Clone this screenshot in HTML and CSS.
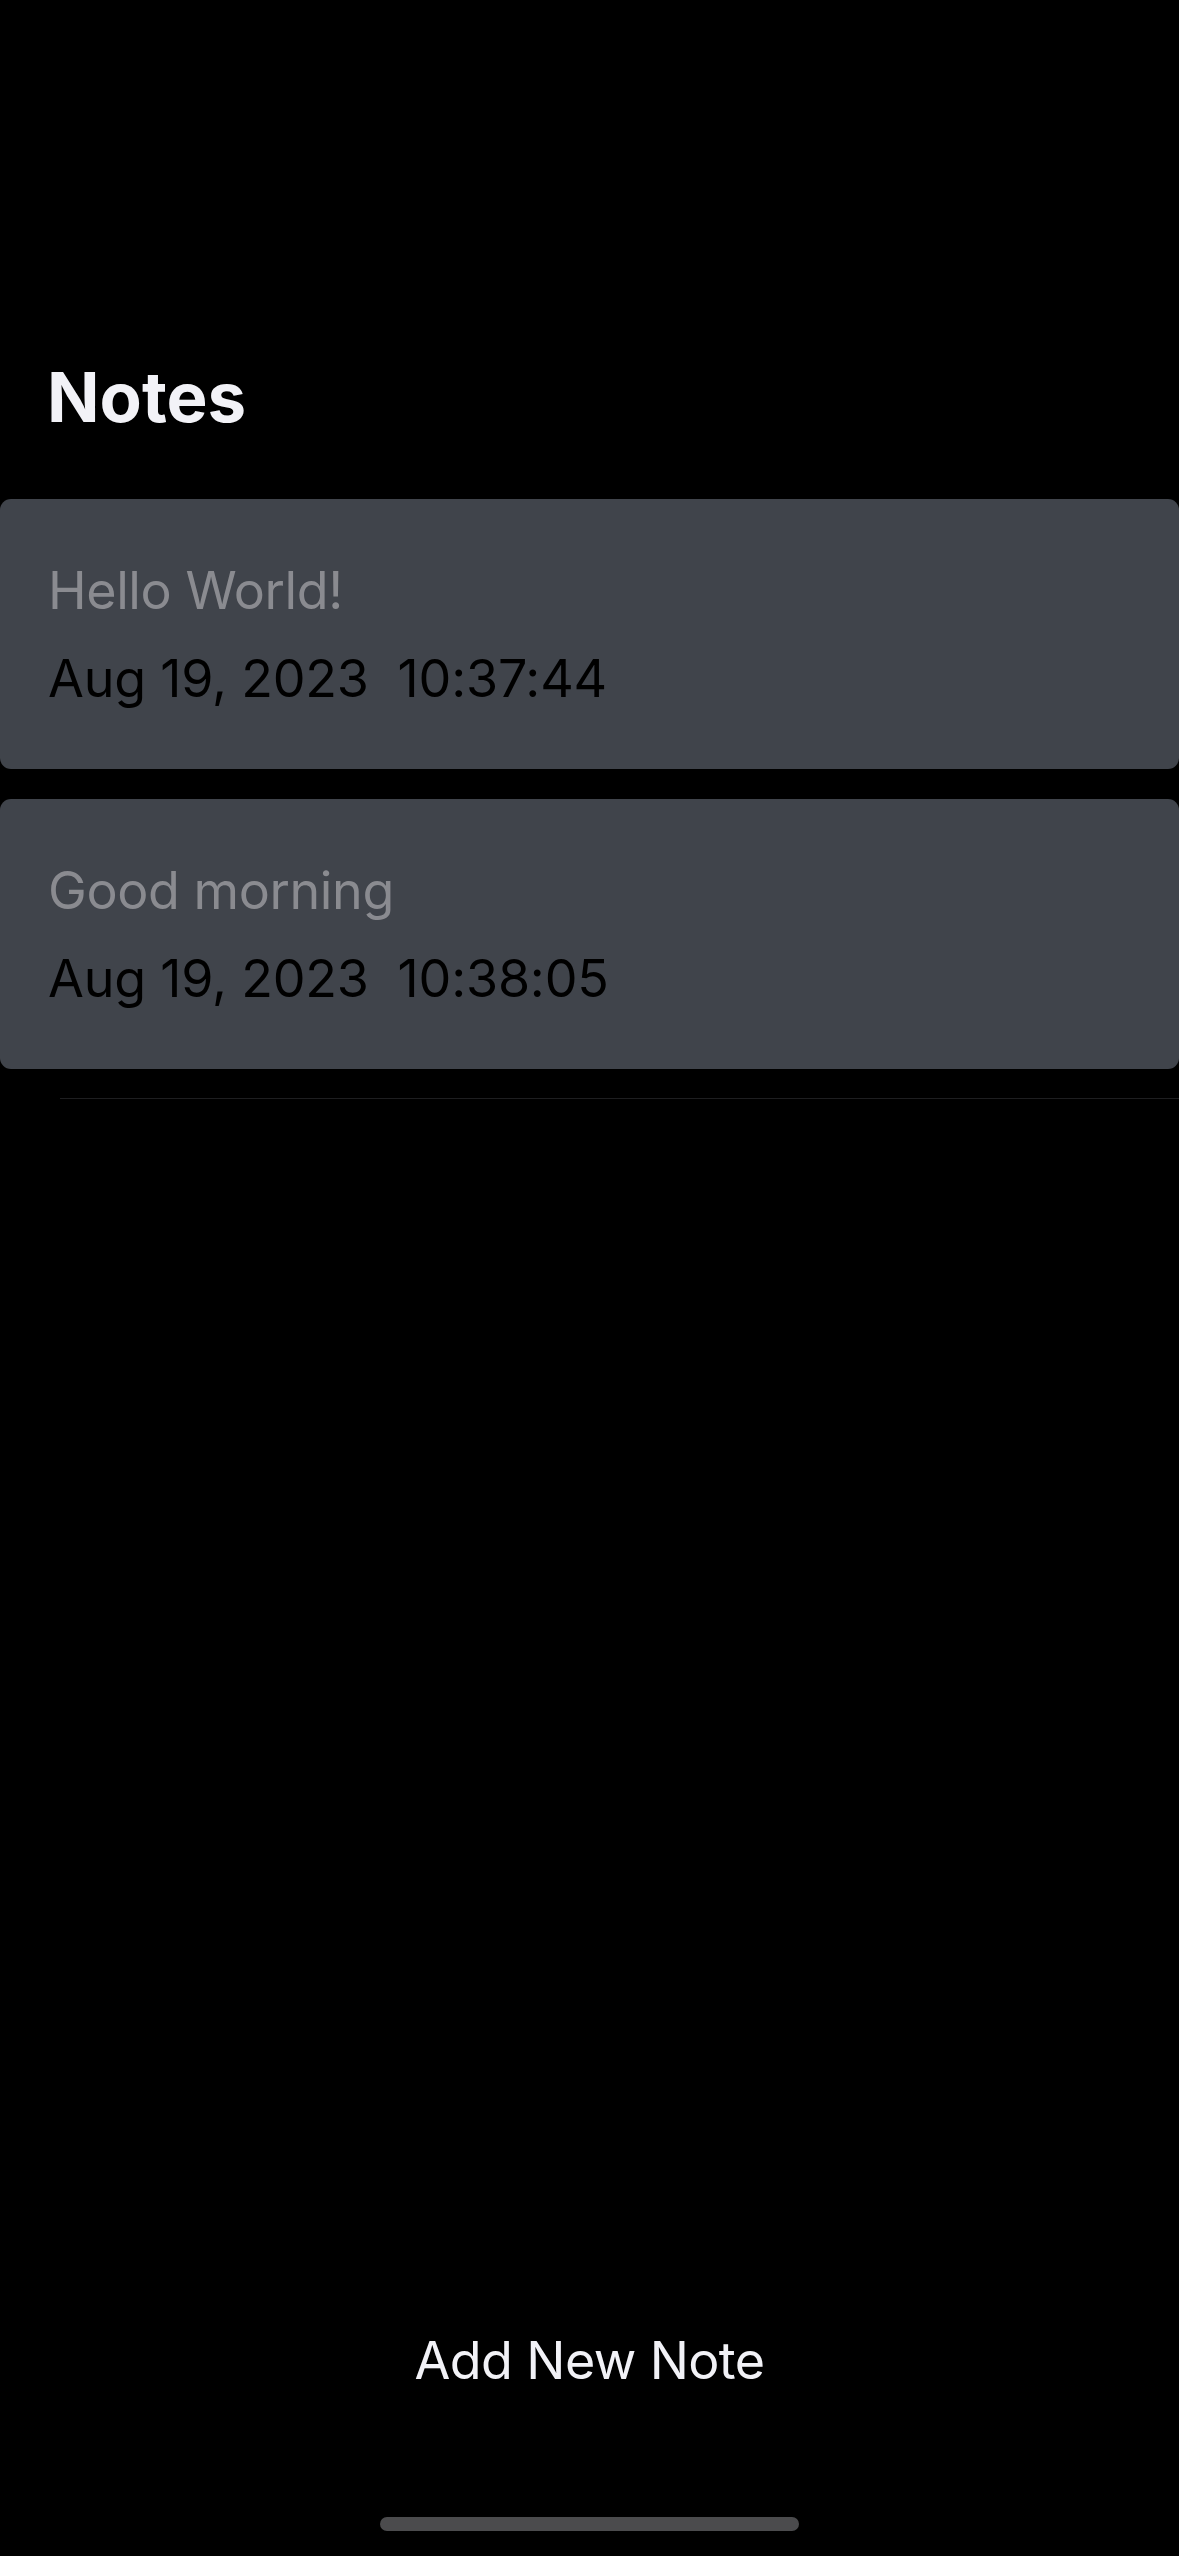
FILE: index.html
```html
<!DOCTYPE html>
<html lang="en">
<head>
<meta charset="utf-8">
<title>Notes</title>
<link rel="stylesheet" href="styles.css">
</head>
<body>
<div class="page">
  <main class="content">
    <h1 class="title">Notes</h1>
    <ul class="notes">
      <li class="note">
        <div class="note-title">Hello World!</div>
        <div class="note-date">Aug 19, 2023&nbsp; 10:37:44</div>
      </li>
      <li class="note">
        <div class="note-title">Good morning</div>
        <div class="note-date">Aug 19, 2023&nbsp; 10:38:05</div>
      </li>
    </ul>
    <div class="separator"></div>
  </main>
  <footer class="footer">
    <button class="add-btn">Add New Note</button>
    <div class="home-indicator"></div>
  </footer>
</div>
</body>
</html>
```

FILE: styles.css
```css
* { box-sizing: border-box; }
html, body {
  margin: 0;
  padding: 0;
  background: #000;
}
body {
  font-family: Inter, "Noto Sans", sans-serif;
  color: #f2f2f7;
}
.page {
  width: 1179px;
  height: 2556px;
  display: flex;
  flex-direction: column;
}
.content {
  padding-top: 355px;
}
.title {
  margin: 0 0 60px 47px;
  font-size: 69px;
  line-height: 84px;
  font-weight: 700;
  color: #f2f2f7;
}
.notes {
  list-style: none;
  margin: 0;
  padding: 0;
  display: flex;
  flex-direction: column;
  gap: 30px;
}
.note {
  background: #40444b;
  border-radius: 11px;
  padding: 61px 48px 59px 48px;
}
.note-title {
  font-size: 52px;
  line-height: 62px;
  letter-spacing: -0.4px;
  color: #8a8b90;
  margin-bottom: 26px;
}
.note-date {
  font-size: 52px;
  line-height: 62px;
  letter-spacing: -0.2px;
  color: #000;
}
.separator {
  margin: 29px 0 0 60px;
  height: 1px;
  background: #1e1e20;
}
.footer {
  margin-top: auto;
  display: flex;
  flex-direction: column;
  align-items: center;
  padding-bottom: 25px;
}
.add-btn {
  background: none;
  border: 0;
  padding: 0;
  font-family: Inter, "Noto Sans", sans-serif;
  font-size: 52px;
  line-height: 62px;
  letter-spacing: -0.6px;
  color: #f2f2f7;
  margin-bottom: 125px;
}
.home-indicator {
  width: 419px;
  height: 14px;
  border-radius: 7px;
  background: #4b4b4d;
}
```
